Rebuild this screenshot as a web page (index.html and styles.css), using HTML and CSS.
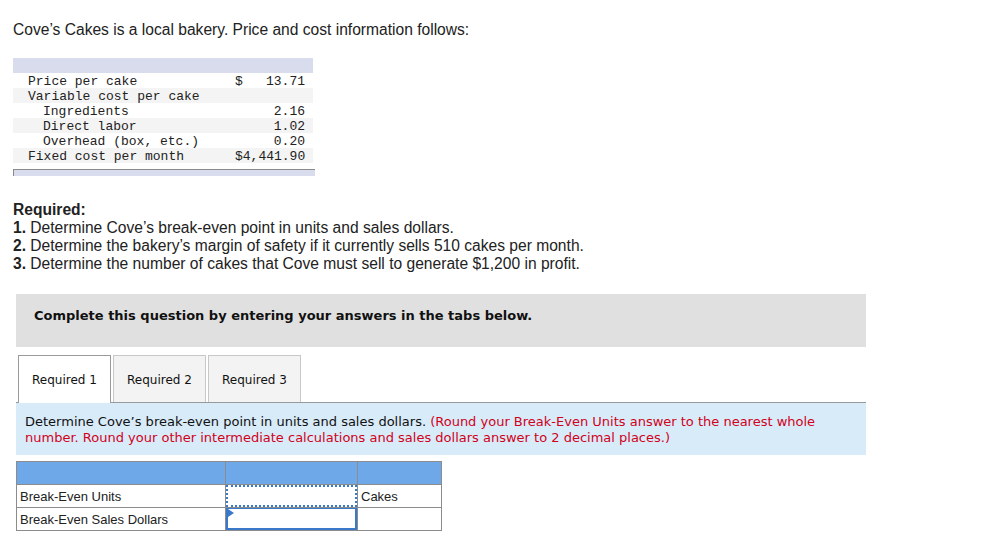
FILE: index.html
```html
<!DOCTYPE html>
<html>
<head>
<meta charset="utf-8">
<link rel="stylesheet" href="styles.css">
</head>
<body>
<p class="intro">Cove’s Cakes is a local bakery. Price and cost information follows:</p>

<div class="data">
  <div class="data-head"></div>
  <div class="drow"><span class="lbl">Price per cake</span><span class="val"><span>$</span><span>13.71</span></span></div>
  <div class="drow alt"><span class="lbl">Variable cost per cake</span><span class="val"></span></div>
  <div class="drow"><span class="lbl ind">Ingredients</span><span class="val"><span></span><span>2.16</span></span></div>
  <div class="drow alt"><span class="lbl ind">Direct labor</span><span class="val"><span></span><span>1.02</span></span></div>
  <div class="drow"><span class="lbl ind">Overhead (box, etc.)</span><span class="val"><span></span><span>0.20</span></span></div>
  <div class="drow alt"><span class="lbl">Fixed cost per month</span><span class="val"><span></span><span>$4,441.90</span></span></div>
  <div class="data-foot"></div>
</div>

<div class="required">
  <div class="req-title">Required:</div>
  <div><b>1.</b> Determine Cove’s break-even point in units and sales dollars.</div>
  <div><b>2.</b> Determine the bakery’s margin of safety if it currently sells 510 cakes per month.</div>
  <div><b>3.</b> Determine the number of cakes that Cove must sell to generate $1,200 in profit.</div>
</div>

<div class="complete">Complete this question by entering your answers in the tabs below.</div>

<div class="tabs">
  <div class="tab active">Required 1</div>
  <div class="tab">Required 2</div>
  <div class="tab">Required 3</div>
</div>

<div class="instr">Determine Cove’s break-even point in units and sales dollars. <span class="red">(Round your Break-Even Units answer to the nearest whole number. Round your other intermediate calculations and sales dollars answer to 2 decimal places.)</span></div>

<table class="answer">
  <tr class="ahead"><td class="c1"></td><td class="c2"></td><td class="c3"></td></tr>
  <tr><td class="c1">Break-Even Units</td><td class="c2"><div class="inp dotted"></div></td><td class="c3 unit">Cakes</td></tr>
  <tr><td class="c1">Break-Even Sales Dollars</td><td class="c2"><div class="inp solid"><span class="tri"></span></div></td><td class="c3"></td></tr>
</table>
</body>
</html>
```

FILE: styles.css
```css
html, body {
  margin: 0;
  padding: 0;
  background: #fff;
}
body {
  font-family: "Liberation Sans", Arial, sans-serif;
  color: #222;
}
.intro {
  margin: 21px 0 0 13px;
  font-size: 15.6px;
  line-height: 18px;
}
.data {
  margin: 19px 0 0 13px;
  width: 302px;
  font-family: "Liberation Mono", "Courier New", monospace;
  font-size: 13px;
  color: #222;
}
.data-head {
  width: 300px;
  height: 15px;
  background: #d9dcec;
}
.drow {
  width: 300px;
  height: 14px;
  padding-top: 1px;
  line-height: 15px;
  display: flex;
  background: #fff;
}
.drow.alt {
  background: #f4f4f4;
}
.lbl {
  flex: 1;
  padding-left: 15px;
  white-space: pre;
}
.lbl.ind {
  padding-left: 30px;
}
.val {
  width: 70px;
  display: flex;
  justify-content: space-between;
  padding-right: 8px;
}
.data-foot {
  margin-top: 6px;
  height: 6px;
  border-top: 1px solid #8a8a8a;
  border-left: 1px solid #8a8a8a;
  background: #d9dcec;
}
.required {
  margin: 25px 0 0 13px;
  font-size: 15.6px;
  line-height: 18px;
}
.req-title {
  font-weight: bold;
}
.complete {
  margin: 21px 0 0 16px;
  width: 832px;
  height: 39px;
  padding: 14px 0 0 18px;
  background: #e0e0e0;
  font-family: "DejaVu Sans", Verdana, sans-serif;
  font-weight: bold;
  font-size: 13px;
  line-height: 16px;
  color: #111;
}
.tabs {
  margin: 8px 0 0 16px;
  width: 850px;
  display: flex;
  gap: 2px;
  border-bottom: 1px solid #9a9a9a;
  padding-left: 2px;
  box-sizing: border-box;
}
.tab {
  width: 91px;
  height: 46px;
  padding-top: 1px;
  box-sizing: border-box;
  border: 1px solid #c8c8c8;
  border-bottom: none;
  background: #f3f3f3;
  display: flex;
  align-items: center;
  justify-content: center;
  font-family: "DejaVu Sans", Verdana, sans-serif;
  font-size: 12px;
  color: #111;
}
.tab {
  width: 93px;
  height: 47px;
}
.tab.active {
  background: #fff;
  border-color: #9a9a9a;
  height: 48px;
  margin-bottom: -1px;
}
.instr {
  margin: 0 0 0 16px;
  width: 841px;
  height: 41px;
  padding: 11px 0 0 9px;
  background: #d8ebf9;
  font-family: "DejaVu Sans", Verdana, sans-serif;
  font-size: 13px;
  line-height: 16px;
  color: #111;
}
.red {
  color: #d0021b;
}
.answer {
  margin: 6px 0 0 16px;
  border-collapse: collapse;
  table-layout: fixed;
  font-family: "Liberation Sans", Arial, sans-serif;
  font-size: 13px;
  color: #222;
}
.answer td {
  border: 1px solid #8c8c8c;
  height: 22px;
  padding: 0;
}
.answer .c1 {
  width: 205px;
  padding-left: 3px;
}
.answer .c2 {
  width: 131px;
}
.answer .c3 {
  width: 80px;
  padding-left: 3px;
}
.ahead td {
  background: #6fa8e8;
}
.inp {
  box-sizing: border-box;
  height: 22px;
}
.inp.dotted {
  border: 2px dotted #3a78c9;
}
.inp.solid {
  border: 2px solid #3a78c9;
  border-top-width: 1px;
  position: relative;
}
.tri {
  position: absolute;
  left: 0;
  top: 0;
  width: 0;
  height: 0;
  border-top: 4px solid transparent;
  border-bottom: 4px solid transparent;
  border-left: 6px solid #3a78c9;
}
```
